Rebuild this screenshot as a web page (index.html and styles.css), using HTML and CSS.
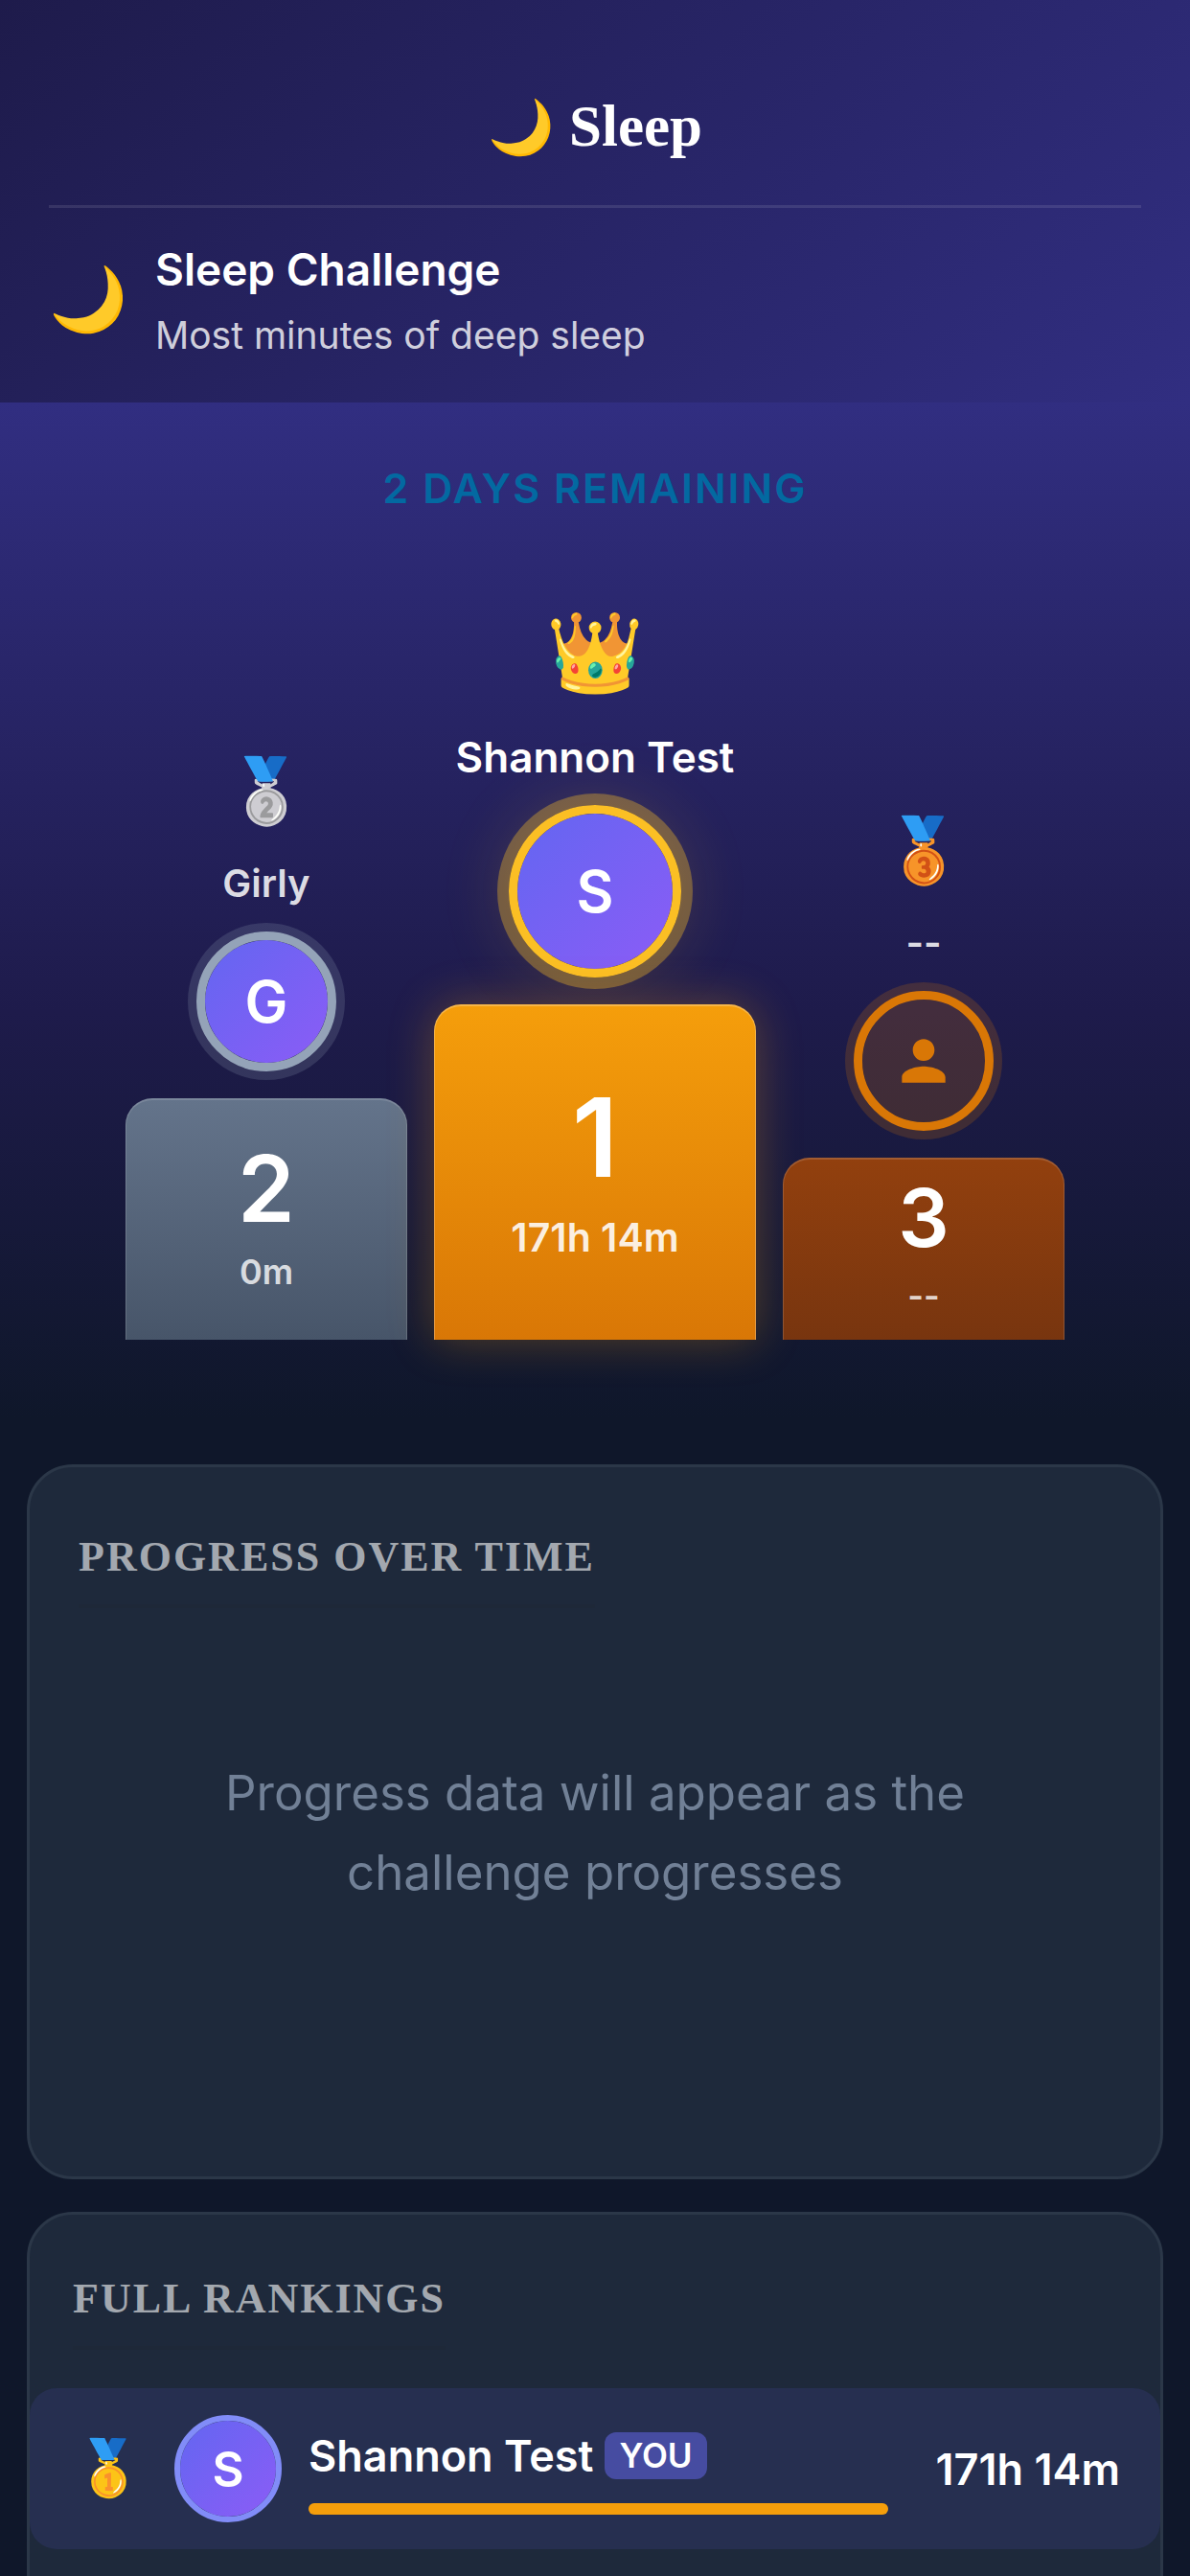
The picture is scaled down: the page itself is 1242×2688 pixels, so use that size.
FILE: index.html
```html
<!DOCTYPE html>
<html lang="en">
<head>
  <meta charset="UTF-8" />
  <meta name="viewport" content="width=device-width, initial-scale=1.0"/>
  <title>Sleep Challenge</title>
  <link rel="stylesheet" href="styles.css">
</head>
<body>

<header>
  <h1><span class="emoji">🌙</span> Sleep</h1>
  <div class="challenge">
    <span class="challenge-icon emoji">🌙</span>
    <div>
      <h2>Sleep Challenge</h2>
      <p>Most minutes of deep sleep</p>
    </div>
  </div>
</header>

<section class="podium-section">
  <div class="remaining">2 days remaining</div>

  <div class="podium">
    <div class="place second">
      <span class="medal emoji">🥈</span>
      <div class="name">Girly</div>
      <div class="avatar">G</div>
      <div class="block">
        <div class="rank">2</div>
        <div class="score">0m</div>
      </div>
    </div>

    <div class="place first">
      <span class="medal emoji">👑</span>
      <div class="name">Shannon Test</div>
      <div class="avatar">S</div>
      <div class="block">
        <div class="rank">1</div>
        <div class="score">171h 14m</div>
      </div>
    </div>

    <div class="place third">
      <span class="medal emoji">🥉</span>
      <div class="name">--</div>
      <div class="avatar">
        <svg viewBox="0 0 24 24" aria-hidden="true">
          <path d="M12 12c2.21 0 4-1.79 4-4s-1.79-4-4-4-4 1.790-4 4 1.790 4 4 4zm0 2c-2.670 0-8 1.340-8 4v2h16v-2c0-2.660-5.330-4-8-4z"/>
        </svg>
      </div>
      <div class="block">
        <div class="rank">3</div>
        <div class="score">--</div>
      </div>
    </div>
  </div>
</section>

<main>
  <section class="card progress-card">
    <h3>Progress Over Time</h3>
    <p class="no-data">Progress data will appear as the challenge progresses</p>
  </section>

  <section class="card rankings-card">
    <h3>Full Rankings</h3>
    <div class="ranking-row">
      <span class="row-medal emoji">🥇</span>
      <div class="row-avatar">S</div>
      <div class="row-info">
        <div class="row-name">Shannon Test <span class="you-badge">YOU</span></div>
        <div class="bar"><div class="bar-fill" style="width: 100%"></div></div>
      </div>
      <div class="row-score">171h 14m</div>
    </div>
  </section>
</main>

</body>
</html>
```
FILE: styles.css
```css
* {
  box-sizing: border-box;
}

body {
  margin: 0;
  height: 100vh;
  overflow: hidden;
  font-family: Inter, 'Liberation Sans', sans-serif;
  background-color: #0f172a;
  color: white;
}

h1, h2, h3, p {
  margin: 0;
}

.emoji {
  font-family: 'Noto Color Emoji', sans-serif;
  font-weight: normal;
}

/* Header */
header {
  padding: 84px 51px 42px;
  background: linear-gradient(135deg, #1e1b4b, #312e81);
}

h1 {
  padding-bottom: 33px;
  border-bottom: 3px solid rgba(255, 255, 255, 0.1);
  font-family: 'Liberation Serif', serif;
  font-size: 61px;
  line-height: 96px;
  text-align: center;
}

h1 .emoji {
  font-size: 56px;
}

.challenge {
  display: flex;
  align-items: center;
  gap: 27px;
  padding-top: 30px;
}

.challenge-icon {
  width: 84px;
  font-size: 66px;
  line-height: 84px;
}

h2 {
  font-size: 46px;
  line-height: 68px;
  font-weight: 600;
}

.challenge p {
  font-size: 39px;
  line-height: 57px;
  margin-top: 6px;
  color: rgba(255, 255, 255, 0.8);
}

/* Podium */
.podium-section {
  padding: 56px 84px 82px;
  background: linear-gradient(180deg, #312e81, #1e1b4b 60%, #0f172a);
}

.remaining {
  font-size: 43px;
  line-height: 66px;
  font-weight: 600;
  letter-spacing: 2px;
  text-align: center;
  text-transform: uppercase;
  color: #0369a1;
}

.podium {
  display: flex;
  justify-content: center;
  align-items: flex-end;
  gap: 28px;
  margin-top: 84px;
}

.place {
  display: flex;
  flex-direction: column;
  align-items: center;
  width: 294px;
}

.medal {
  font-size: 66px;
  line-height: 84px;
}

.name {
  margin: 24px 0 20px;
  font-size: 40px;
  line-height: 60px;
  font-weight: 600;
  white-space: nowrap;
  color: rgba(255, 255, 255, 0.85);
}

.avatar {
  display: flex;
  justify-content: center;
  align-items: center;
  width: 146px;
  height: 146px;
  margin-bottom: 28px;
  border: 9px solid #94a3b8;
  border-radius: 50%;
  background: linear-gradient(135deg, #6366f1, #8b5cf6) padding-box;
  box-shadow: 0 0 0 9px rgba(148, 163, 184, 0.2);
  font-size: 60px;
  font-weight: 600;
}

.block {
  display: flex;
  flex-direction: column;
  align-items: center;
  justify-content: center;
  width: 100%;
  height: 252px;
  border: 2px solid rgba(255, 255, 255, 0.15);
  border-width: 2px 1px 0;
  border-radius: 28px 28px 0 0;
  background: linear-gradient(180deg, #64748b, #475569) border-box;
}

.rank {
  font-size: 96px;
  line-height: 96px;
  font-weight: 600;
}

.score {
  margin-top: 12px;
  font-size: 36px;
  line-height: 54px;
  font-weight: 600;
  color: rgba(255, 255, 255, 0.8);
}

.first {
  width: 336px;
}

.first .medal {
  font-size: 82px;
  line-height: 110px;
}

.first .name {
  font-size: 44px;
  color: white;
}

.first .avatar {
  width: 180px;
  height: 180px;
  border-color: #fbbf24;
  box-shadow: 0 0 0 12px rgba(251, 191, 36, 0.35), 0 0 72px rgba(251, 191, 36, 0.2);
}

.first .block {
  height: 350px;
  border-color: rgba(255, 255, 255, 0.25);
  background: linear-gradient(180deg, #f59e0b, #d97706) border-box;
  box-shadow: 0 0 48px rgba(245, 158, 11, 0.3);
}

.first .rank {
  font-size: 114px;
  line-height: 114px;
}

.first .score {
  margin-top: 20px;
  font-size: 41px;
  color: rgba(255, 255, 255, 0.9);
}

.third .avatar {
  border-color: #d97706;
  background: rgba(217, 119, 6, 0.2) padding-box;
  box-shadow: 0 0 0 9px rgba(217, 119, 6, 0.2);
}

.avatar svg {
  width: 68px;
  height: 68px;
  fill: #d97706;
}

.third .block {
  height: 190px;
  background: linear-gradient(180deg, #92400e, #78350f) border-box;
}

.third .rank {
  font-size: 84px;
  line-height: 84px;
}

/* Cards */
main {
  display: flex;
  flex-direction: column;
  gap: 34px;
  padding: 48px 28px;
}

.card {
  border: 3px solid #2b3748;
  border-radius: 48px;
  background-color: #1e293b;
}

.card h3 {
  width: fit-content;
  padding-bottom: 16px;
  border-bottom: 4px solid #1e2838;
  font-family: 'Liberation Serif', serif;
  font-size: 44px;
  line-height: 66px;
  letter-spacing: 2px;
  text-transform: uppercase;
  color: rgba(255, 255, 255, 0.6);
}

.progress-card {
  min-height: 746px;
  padding: 61px 51px;
}

.no-data {
  max-width: 900px;
  margin: 151px auto 0;
  font-size: 51px;
  line-height: 83px;
  text-align: center;
  color: #718096;
}

.rankings-card {
  padding: 55px 0 84px;
}

.rankings-card h3 {
  margin: 0 45px 40px;
}

.ranking-row {
  display: flex;
  align-items: center;
  gap: 28px;
  padding: 28px 42px;
  border-radius: 28px;
  background-color: #262f50;
}

.row-medal {
  width: 81px;
  font-size: 57px;
  line-height: 72px;
  text-align: center;
}

.row-avatar {
  display: flex;
  justify-content: center;
  align-items: center;
  width: 112px;
  height: 112px;
  border: 6px solid #818cf8;
  border-radius: 50%;
  background: linear-gradient(135deg, #6366f1, #8b5cf6) padding-box;
  font-size: 51px;
  font-weight: 600;
}

.row-info {
  flex: 1;
}

.row-name {
  display: flex;
  align-items: center;
  gap: 12px;
  font-size: 45px;
  line-height: 68px;
  font-weight: 600;
}

.you-badge {
  padding: 0 15px;
  border-radius: 12px;
  background-color: #464ca1;
  font-size: 35px;
  line-height: 49px;
}

.bar {
  margin-top: 15px;
  height: 12px;
  border-radius: 6px;
  background-color: #334155;
}

.bar-fill {
  height: 100%;
  border-radius: 6px;
  background-color: #f59e0b;
}

.row-score {
  min-width: 214px;
  font-size: 45px;
  font-weight: 600;
  text-align: right;
}
```
